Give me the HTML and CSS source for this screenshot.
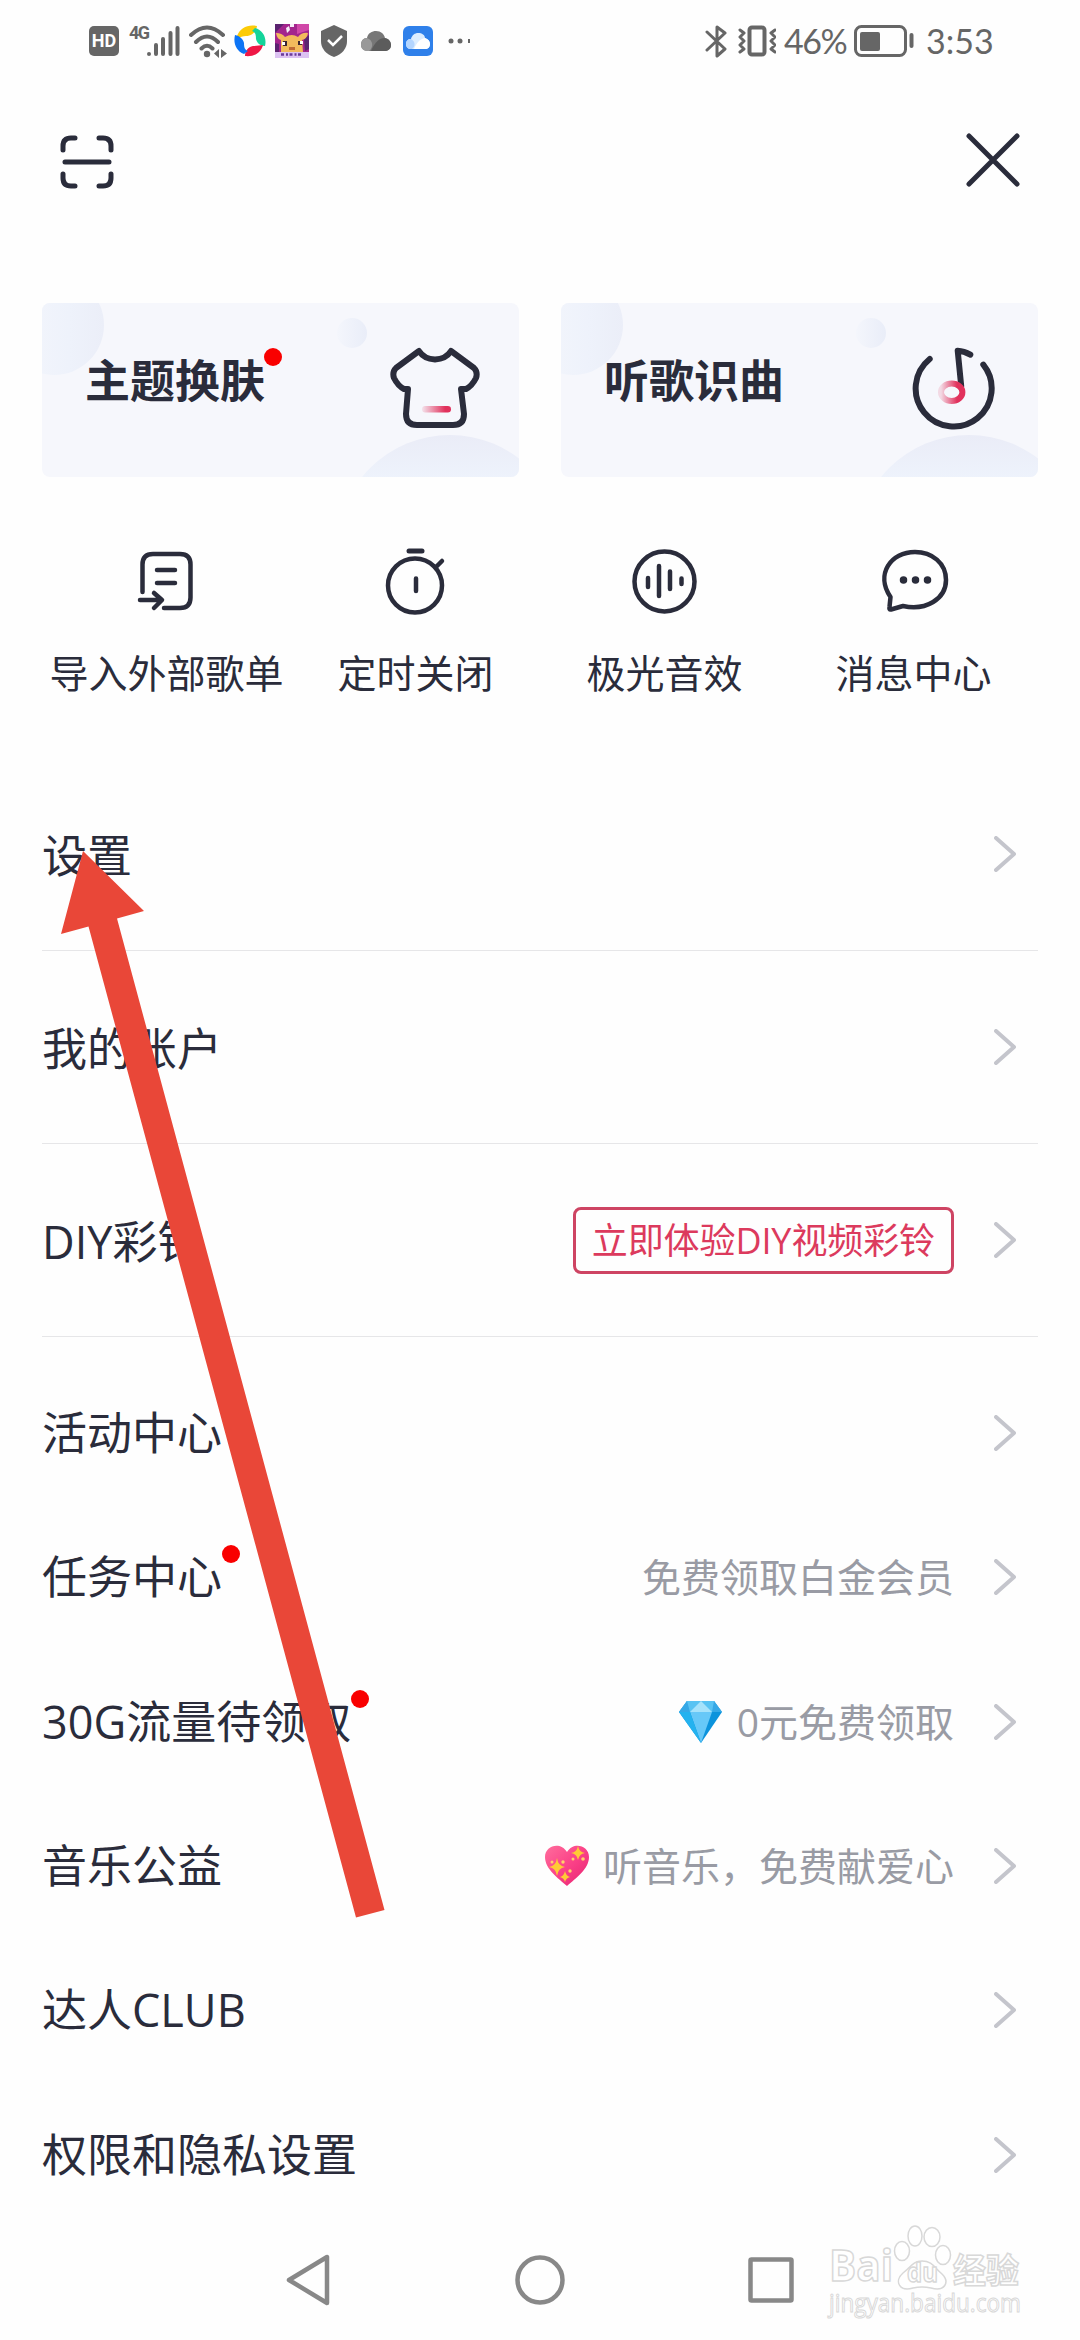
FILE: index.html
```html
<!DOCTYPE html>
<html lang="zh-CN">
<head>
<meta charset="UTF-8">
<meta name="viewport" content="width=device-width, initial-scale=1.0">
<title>更多</title>
<link rel="stylesheet" href="styles.css">
</head>
<body>
<div class="screen">
    <header class="status">
        <div class="status-left">
            <span class="hd">HD</span>
            <span class="net">4G</span>
            <svg class="signal" width="34" height="32" viewBox="0 0 34 32"><path d="M3 29v0M10 20v9M17 14v15M24.500 8v21M31.500 3v26"/></svg>
            <svg class="wifi" width="38" height="34" viewBox="0 0 38 34">
                <path d="M2 11Q18 -4 34 11M7 18Q18 7 29 18M12.500 24.500Q18 19 23.500 24.500"/>
                <circle cx="18" cy="30" r="3.200"/>
                <path class="solid" d="M30 25v9l-5-4.500zM32 25v9l6-4.500z"/>
            </svg>
            <svg class="browser" width="32" height="32" viewBox="0 0 32 32">
                <path fill="#fccb08" d="M3 11C6 3 14-1 23 1C22 7 18 11 12 11C9 11 6 12 3 14z"/>
                <path fill="#14d49a" d="M21 3C29 5 33 13 31 21C26 21 23 18 22 14C22 9 21 7 18 6z"/>
                <path fill="#ee1745" d="M29 20C27 28 20 32 11 31C11 26 14 22 19 21C23 21 26 20 29 20z"/>
                <path fill="#0d74f5" d="M10 29C2 26-1 18 1 10C6 11 9 14 10 18C10 23 11 25 14 26z"/>
            </svg>
            <svg class="game" width="34" height="34" viewBox="0 0 34 34">
                <rect width="34" height="34" fill="#a3258d"/>
                <path fill="#5b2270" d="M0 9L9 0H0zM0 19l4 1v8H0zM29 15l5-4v14l-4 2z"/>
                <path fill="#d047a8" d="M22 0h12v6L22 10z"/>
                <path fill="#f5edf7" d="M11 4l3-2 1 4-3 3zM15 0h4v3h-4z"/>
                <path fill="#f3ba5c" d="M1 9Q7 9 10 13Q17 9 23 13Q27 8 33 9Q32 15 27 16L28 28H6L6 16Q2 15 1 9z"/>
                <path fill="#3c2430" d="M8 17h4v5H8zM23 17h4v4h-4z"/>
                <path fill="#fff" d="M7 18h3v3H7zM25 17h3v3h-3z"/>
                <path fill="#c06934" d="M14 23h6v3h-6z"/>
                <path fill="#dcc2f2" d="M0 28h34v6H0z"/>
                <path stroke="#6a3a98" stroke-width="2.500" stroke-dasharray="3 2 2 1.500" d="M6 30.500h22"/>
            </svg>
            <svg class="shield" width="26" height="32" viewBox="0 0 26 32"><path fill="#666" d="M13 0L26 6V16Q26 27 13 32Q0 27 0 16V6z"/><path d="M7 15l5 5 9-9" fill="none" stroke="#fff" stroke-width="2.500"/></svg>
            <svg class="cloud" width="30" height="21" viewBox="0 0 30 21">
                <path fill="#777" d="M6 7C7 2 11 0 15 0C20 0 23 3 24 7C28 8 30 11 30 14C30 18 27 20 23 20H7C3 20 0 17 0 14C0 10 2 7 6 7z"/>
                <path fill="#999" d="M6 7C2 7 0 10 0 14C0 18 3 20 7 20H8C13 16 12 9 6 7z"/>
                <path fill="#5c5c5c" d="M24 7C18 7 14 11 10 20H23C27 20 30 18 30 14C30 11 28 8 24 7z"/>
            </svg>
            <svg class="drive" width="30" height="30" viewBox="0 0 30 30">
                <rect width="30" height="30" rx="6" fill="#2f80ea"/>
                <path fill="#dcedff" d="M8 13C9 9 12 7 15 7C19 7 22 9 22 12C25 13 27 15 27 18C27 21 25 23 22 23H8C5 23 3 21 3 18C3 15 5 13 8 13z"/>
                <path fill="#b3d5ff" d="M8 13C5 13 3 15 3 18C3 21 5 23 8 23H9C13 20 12 15 8 13z"/>
                <path fill="#fff" d="M22 12C17 13 14 16 11 23H22C25 23 27 21 27 18C27 15 25 13 22 12z"/>
            </svg>
            <svg class="more" width="22" height="6" viewBox="0 0 22 6"><circle cx="3" cy="3" r="2.500"/><circle cx="12" cy="3" r="2.500"/><path d="M20 1h2v4h-2z"/></svg>
        </div>
        <div class="status-right">
            <svg class="bluetooth" width="23" height="34" viewBox="0 0 23 34"><path d="M2 8l18 17-8 7V3l8 6L2 26"/></svg>
            <svg class="vibrate" width="38" height="32" viewBox="0 0 38 32"><rect x="11.500" y="2.500" width="15" height="27" rx="2.500"/><path d="M2 5l4 3-4 4 4 4-4 4 4 4-4 3M37 5l-4 3 4 4-4 4 4 4-4 4 4 3"/></svg>
            <span class="percent">46%</span>
            <svg class="battery" width="60" height="32" viewBox="0 0 60 32"><rect x="1.500" y="1.500" width="50" height="29" rx="6"/><rect class="level" x="6" y="7" width="20" height="19" rx="2"/><path d="M57.500 10v11"/></svg>
            <span class="clock">3:53</span>
        </div>
    </header>

    <nav class="topbar">
        <svg class="scan" width="54" height="54" viewBox="0 0 54 54"><path d="M3 15V11Q3 3 11 3H15M39 3H43Q51 3 51 11V15M51 39V43Q51 51 43 51H39M15 51H11Q3 51 3 43V39M5 27H49"/></svg>
        <svg class="close" width="54" height="54" viewBox="0 0 54 54"><path d="M3 3L51 51M51 3L3 51"/></svg>
    </nav>

    <section class="cards">
        <div class="card">
            <i class="bubble b1"></i><i class="bubble b2"></i><i class="bubble b3"></i>
            <span class="card-title">主题换肤<i class="dot"></i></span>
            <svg class="shirt" width="90" height="82" viewBox="0 0 90 82">
                <defs><linearGradient id="bar"><stop offset="0" stop-color="#e1315c" stop-opacity="0.100"/><stop offset="0.800" stop-color="#e1315c"/></linearGradient></defs>
                <path d="M29 4L6 21Q2 25 4 31Q8 39 14 42H18L16 67Q16 78 27 78H63Q74 78 74 67L71 42H76Q82 39 86 31Q88 25 84 21L61 4Q56 12 45 12.500Q34 12 29 4z"/>
                <rect x="32" y="59" width="29" height="6.500" rx="3.200" fill="url(#bar)"/>
            </svg>
        </div>
        <div class="card">
            <i class="bubble b1"></i><i class="bubble b2"></i><i class="bubble b3"></i>
            <span class="card-title">听歌识曲</span>
            <svg class="song" width="84" height="84" viewBox="21 27 84 84">
                <defs><linearGradient id="ring"><stop offset="0" stop-color="#e1315c" stop-opacity="0.150"/><stop offset="0.750" stop-color="#e1315c"/></linearGradient></defs>
                <path d="M38.700 39A38 38 0 1 0 92.300 44.700M70.200 66L66.700 30.700Q73 31 79.300 34.700"/>
                <ellipse cx="60.700" cy="72.300" rx="10.700" ry="8.700"/>
            </svg>
        </div>
    </section>

    <section class="tools">
        <div class="tool">
            <svg width="66" height="66" viewBox="3 0 66 66"><path d="M11.500 43V15.500Q11.500 5 22 5H49Q59.500 5 59.500 15.500V48.500Q59.500 59 49 59H33M26 21H44M26 34H44M9 51H30M23 44L31 51L23 59"/></svg>
            <span>导入外部歌单</span>
        </div>
        <div class="tool">
            <svg width="66" height="66" viewBox="0 0 66 66"><circle cx="32" cy="36.500" r="27"/><path d="M26 2H39" stroke-width="5"/><path d="M53 18L59 12M33 29.500V42"/></svg>
            <span>定时关闭</span>
        </div>
        <div class="tool">
            <svg width="66" height="66" viewBox="0 0 66 66"><circle cx="32.500" cy="32.500" r="30"/><path d="M16 29V38M27 17V47M38 22.500V40M49.500 29.500V35"/></svg>
            <span>极光音效</span>
        </div>
        <div class="tool">
            <svg width="66" height="66" viewBox="0 0 66 66"><path d="M9.500 48C-6 25 10 3 34 3C51 3 65 14 65 31C65 50 45 62 22 57L10 60.500Q8 61 8.500 58z"/><path class="dots" d="M22.500 31v0M34.500 31v0M46.500 31v0"/></svg>
            <span>消息中心</span>
        </div>
    </section>

    <ul class="menu">
        <li class="row tall"><span class="label">设置</span><svg class="arrow" viewBox="0 0 22 36"><path d="M2 2L20 18L2 34"/></svg></li>
        <li class="row tall"><span class="label">我的账户</span><svg class="arrow" viewBox="0 0 22 36"><path d="M2 2L20 18L2 34"/></svg></li>
        <li class="row tall"><span class="label">DIY彩铃</span><span class="promo">立即体验DIY视频彩铃</span><svg class="arrow" viewBox="0 0 22 36"><path d="M2 2L20 18L2 34"/></svg></li>
        <li class="row first"><span class="label">活动中心</span><svg class="arrow" viewBox="0 0 22 36"><path d="M2 2L20 18L2 34"/></svg></li>
        <li class="row"><span class="label">任务中心<i class="dot"></i></span><span class="hint">免费领取白金会员</span><svg class="arrow" viewBox="0 0 22 36"><path d="M2 2L20 18L2 34"/></svg></li>
        <li class="row"><span class="label">30G流量待领取<i class="dot"></i></span>
            <span class="hint">
                <svg class="emoji" width="44" height="44" viewBox="0 0 44 44">
                    <path fill="#0c93dc" d="M8 1H35L43 12L22 43L0 12z"/>
                    <path fill="#58c3f3" d="M8 1H35L43 12H0z"/>
                    <path fill="#a5e2fb" d="M22 1L33 12H11z"/>
                    <path fill="#35a8e6" d="M8 1L11 12H0zM35 1L33 12H43z"/>
                    <path fill="#67c8f8" d="M11 12H33L22 43z"/>
                    <path fill="#24b2ef" d="M0 12H11L22 43z"/>
                </svg>0元免费领取</span>
            <svg class="arrow" viewBox="0 0 22 36"><path d="M2 2L20 18L2 34"/></svg></li>
        <li class="row"><span class="label">音乐公益</span>
            <span class="hint">
                <svg class="emoji" width="44" height="44" viewBox="0 0 44 44">
                    <defs><linearGradient id="love" x2="1" y2="1"><stop stop-color="#ff6d9c"/><stop offset="0.500" stop-color="#fb4288"/><stop offset="1" stop-color="#e62372"/></linearGradient></defs>
                    <path fill="url(#love)" d="M22 42C13 34 0 25 0 13C0 2 15-3 22 8C29-3 44 2 44 13C44 25 31 34 22 42z"/>
                    <path fill="#ffca35" d="M33 2Q34 8 40 9Q34 10 33 16Q32 10 26 9Q32 8 33 2zM12 14Q13 22 20 23Q13 24 12 32Q11 24 4 23Q11 22 12 14zM20 27Q21 32 25 33Q21 34 20 38Q19 34 15 33Q19 32 20 27z"/>
                    <g fill="#ffd16a"><circle cx="38" cy="15" r="1.800"/><circle cx="28" cy="15" r="1.500"/><circle cx="18" cy="18" r="1.700"/><circle cx="7" cy="18" r="1.500"/><circle cx="25" cy="27" r="1.700"/></g>
                </svg>听音乐，免费献爱心</span>
            <svg class="arrow" viewBox="0 0 22 36"><path d="M2 2L20 18L2 34"/></svg></li>
        <li class="row"><span class="label">达人CLUB</span><svg class="arrow" viewBox="0 0 22 36"><path d="M2 2L20 18L2 34"/></svg></li>
        <li class="row"><span class="label">权限和隐私设置</span><svg class="arrow" viewBox="0 0 22 36"><path d="M2 2L20 18L2 34"/></svg></li>
    </ul>

    <footer class="navbar">
        <svg width="46" height="52" viewBox="0 0 46 52"><path d="M41 3V49L3 26z"/></svg>
        <svg width="50" height="50" viewBox="0 0 50 50"><circle cx="25" cy="25" r="22.500"/></svg>
        <svg width="46" height="46" viewBox="0 0 46 46"><rect x="2.500" y="2.500" width="41" height="41" rx="1"/></svg>
    </footer>

    <svg class="pointer" width="326" height="1070" viewBox="60 850 326 1070"><path d="M83 851L144 911L117 918.500L384.500 1910L356 1917.500L88.500 926.500L61 934z"/></svg>

    <svg class="watermark" width="204" height="100" viewBox="0 0 204 100">
        <text x="2" y="61" font-size="43" textLength="64" lengthAdjust="spacingAndGlyphs">Bai</text>
        <ellipse cx="75" cy="31" rx="7.500" ry="9.500"/>
        <ellipse cx="88" cy="16" rx="7" ry="10"/>
        <ellipse cx="105" cy="17" rx="8" ry="9.500"/>
        <ellipse cx="116" cy="35" rx="7.500" ry="9.500"/>
        <path d="M95 41C105 41 107 47 115 54C123 62 118 72 104 68Q95 66 86 68C72 72 67 61 76 53C84 47 86 41 95 41z"/>
        <text x="80" y="62" font-size="27" textLength="31" lengthAdjust="spacingAndGlyphs">du</text>
        <text x="126" y="63" font-size="34" textLength="66" lengthAdjust="spacingAndGlyphs">经验</text>
        <text class="url" x="2" y="92" font-size="25" textLength="192" lengthAdjust="spacingAndGlyphs">jingyan.baidu.com</text>
    </svg>
</div>
</body>
</html>
```

FILE: styles.css
```css
* {
    box-sizing: border-box;
}
body {
    margin: 0;
    background-color: #fefefe;
    color: #2a2c3b;
    font-family: "Open Sans", "Noto Sans CJK SC", sans-serif;
}
.screen {
    position: relative;
    width: 1080px;
    height: 2340px;
    overflow: hidden;
    display: flex;
    flex-direction: column;
}
svg {
    display: block;
    flex: none;
}

/* status bar */
.status {
    height: 82px;
    padding: 0 90px 0 89px;
    display: flex;
    justify-content: space-between;
    align-items: center;
    color: #666;
}
.status-left, .status-right {
    display: flex;
    align-items: center;
}
.status svg {
    fill: #666;
}
.hd {
    width: 30px;
    height: 30px;
    border-radius: 5px;
    background-color: #666;
    color: #fff;
    font: bold 18px/30px Roboto, sans-serif;
    text-align: center;
}
.net {
    width: 18px;
    margin: 0 1px 17px 10px;
    font: bold 18px/18px Roboto, sans-serif;
    letter-spacing: -1.5px;
}
.signal path, .wifi path, .bluetooth path, .vibrate path, .vibrate rect, .battery path, .battery rect {
    fill: none;
    stroke: #666;
    stroke-width: 4;
    stroke-linecap: round;
    stroke-linejoin: round;
}
.status .signal {
    margin: 0 9px 0 -2px;
}
.wifi .solid {
    fill: #666;
    stroke: none;
}
.browser {
    margin-left: 7px;
}
.game {
    margin-left: 9px;
}
.shield {
    margin-left: 12px;
}
.cloud {
    margin-left: 14px;
}
.drive {
    margin-left: 12px;
}
.more {
    margin-left: 15px;
}
.bluetooth path, .vibrate path {
    stroke-width: 3;
}
.vibrate {
    margin-left: 10px;
}
.percent, .clock {
    font: 34px/40px Lato, sans-serif;
}
.percent {
    width: 63px;
    margin: 0 7px 0 8px;
    letter-spacing: -1.5px;
    white-space: nowrap;
}
.battery rect {
    stroke-width: 3;
}
.battery .level {
    fill: #666;
    stroke: none;
}
.clock {
    width: 64px;
    margin-left: 12px;
    white-space: nowrap;
}

.topbar {
    height: 221px;
    padding: 52px 60px 0 60px;
    display: flex;
    justify-content: space-between;
}
.topbar path {
    fill: none;
    stroke: #2a2c3b;
    stroke-width: 5;
    stroke-linecap: round;
}
.scan {
    margin-top: 1px;
}
.close {
    margin-top: -1px;
}

/* big cards */
.cards {
    display: grid;
    grid-template-columns: 1fr 1fr;
    gap: 42px;
    padding: 0 42px;
}
.card {
    position: relative;
    height: 174px;
    padding: 44px 39px 0 43px;
    border-radius: 8px;
    background-color: #f6f7fc;
    overflow: hidden;
    display: flex;
    justify-content: space-between;
}
.card-title {
    position: relative;
    height: 66px;
    font-size: 45px;
    line-height: 68px;
    font-weight: bold;
}
.bubble {
    position: absolute;
    border-radius: 50%;
}
.b1 {
    left: -38px;
    top: -28px;
    width: 100px;
    height: 100px;
    background: linear-gradient(to right, #f5f7fc, #eef2fb 65%, #ebeef8);
}
.b2 {
    left: 295px;
    top: 15px;
    width: 30px;
    height: 30px;
    background: linear-gradient(to right, #f4f6fc, #e9edf8);
}
.b3 {
    left: 295px;
    top: 132px;
    width: 226px;
    height: 226px;
    background: linear-gradient(#eaecf7, #eef3fc 20%);
}
.dot {
    position: absolute;
    left: 100%;
    top: 1px;
    width: 18px;
    height: 18px;
    border-radius: 50%;
    background-color: #f90000;
}
.card-title .dot {
    margin-left: -1px;
}
.shirt, .song {
    position: relative;
}
.shirt > path, .song > path, .song ellipse {
    fill: none;
    stroke: #2a2c3b;
    stroke-width: 6;
    stroke-linecap: round;
    stroke-linejoin: round;
}
.song ellipse {
    stroke: url(#ring);
}
.song {
    margin-right: 3px;
}

/* quick tools */
.tools {
    display: grid;
    grid-template-columns: repeat(4, 1fr);
    height: 281px;
    padding: 72px 42px 0;
}
.tool {
    display: flex;
    flex-direction: column;
    align-items: center;
    font-size: 39px;
}
.tool svg {
    overflow: visible;
    fill: none;
    stroke: #2a2c3b;
    stroke-width: 4.5;
    stroke-linecap: round;
    stroke-linejoin: round;
}
.tool .dots {
    stroke-width: 7.5;
}
.tool span {
    margin-top: 30px;
    line-height: 56px;
    white-space: nowrap;
}

/* menu list */
.menu {
    margin: 0;
    padding: 0 42px;
    list-style: none;
}
.row {
    height: 144.3px;
    padding-right: 22px;
    display: flex;
    align-items: center;
}
.tall {
    height: 193px;
    border-bottom: 1px solid #e6e6e8;
}
.tall .label {
    padding-top: 3px;
}
.first {
    margin-top: 24px;
}
.label {
    position: relative;
    margin-right: auto;
    font-size: 45px;
    line-height: 66px;
    white-space: nowrap;
}
.hint {
    display: flex;
    align-items: center;
    color: #999ba4;
    font-size: 39px;
    line-height: 56px;
    white-space: nowrap;
}
.emoji {
    margin-right: 14px;
}
.promo {
    height: 67px;
    padding: 0 16px;
    border: 3px solid #ce4463;
    border-radius: 8px;
    color: #dc3a5d;
    font-size: 36px;
    line-height: 62px;
    letter-spacing: -0.1px;
}
.arrow {
    width: 22px;
    height: 36px;
    margin-left: 40px;
    fill: none;
    stroke: #c4c5cc;
    stroke-width: 4;
    stroke-linecap: round;
    stroke-linejoin: round;
}

/* system navigation */
.navbar {
    position: absolute;
    left: 0;
    bottom: 0;
    width: 1080px;
    height: 120px;
    padding: 0 286px;
    display: flex;
    justify-content: space-between;
    align-items: center;
}
.navbar svg {
    fill: none;
    stroke: #888;
    stroke-width: 4.5;
    stroke-linejoin: round;
}

.pointer {
    position: absolute;
    left: 60px;
    top: 850px;
    fill: #e94738;
}
.watermark {
    position: absolute;
    left: 827px;
    top: 2220px;
    overflow: visible;
    fill: #fff;
    stroke: #d8d8d8;
    stroke-width: 1.5;
    font-weight: bold;
}
.watermark .url {
    font-weight: normal;
    stroke-width: 1;
}
```
